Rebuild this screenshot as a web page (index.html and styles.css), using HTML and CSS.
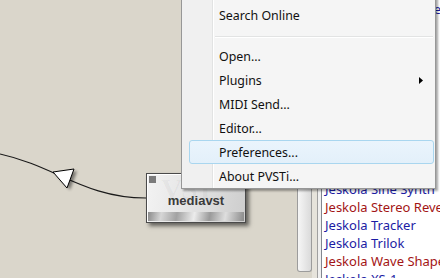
FILE: index.html
```html
<!DOCTYPE html>
<html>
<head>
<meta charset="utf-8">
<link rel="stylesheet" href="styles.css">
</head>
<body>
<div class="app">
  <div class="canvas">
    <svg class="wires" width="297" height="278" viewBox="0 0 297 278">
      <defs>
        <filter id="blur" x="-50%" y="-50%" width="200%" height="200%"><feGaussianBlur stdDeviation="1.6"/></filter>
      </defs>
      <path d="M0,154 C55,166 85,198 146,198" fill="none" stroke="#1a1a1a" stroke-width="1.2"/>
      <polygon points="56,174 77,171 70,190" fill="#000" opacity="0.45" filter="url(#blur)"/>
      <polygon points="53,172 74,169 67,188" fill="#fff" stroke="#000" stroke-width="1"/>
    </svg>
    <div class="node">
      <div class="node-body">
        <span class="led"></span>
        <span class="watermark">VST</span>
        <span class="node-label">mediavst</span>
      </div>
      <div class="node-bar"></div>
    </div>
  </div>
  <div class="side">
    <div class="track">
      <div class="thumb"></div>
      <div class="gap"></div>
      <div class="edge"></div>
    </div>
    <ul class="list">
      <li class="gen">Jeskola Noise Generator</li>
      <li class="gen">Jeskola Pattern</li>
      <li class="fx">Jeskola Q-Delay</li>
      <li class="fx">Jeskola Raverb</li>
      <li class="fx">Jeskola Reverb</li>
      <li class="fx">Jeskola Reverb 2</li>
      <li class="gen">Jeskola Saw</li>
      <li class="fx">Jeskola Shuffle</li>
      <li class="gen">Jeskola Sine</li>
      <li class="fx">Jeskola Sidechain</li>
      <li class="gen">Jeskola Sine Synth</li>
      <li class="fx">Jeskola Stereo Reverb</li>
      <li class="gen">Jeskola Tracker</li>
      <li class="gen">Jeskola Trilok</li>
      <li class="fx">Jeskola Wave Shaper</li>
      <li class="gen">Jeskola XS-1</li>
    </ul>
  </div>
  <div class="menu">
    <div class="item">Rename...</div>
    <div class="item">Search Online</div>
    <div class="sep"></div>
    <div class="item">Open...</div>
    <div class="item">Plugins<svg class="sub" width="4" height="7" viewBox="0 0 4 7"><path d="M0,0 L4,3.5 L0,7 Z" fill="#000"/></svg></div>
    <div class="item">MIDI Send...</div>
    <div class="item">Editor...</div>
    <div class="item hot">Preferences...</div>
    <div class="item">About PVSTi...</div>
  </div>
</div>
</body>
</html>
```

FILE: styles.css
```css
html, body {
  margin: 0;
  padding: 0;
}
body {
  width: 440px;
  height: 278px;
  overflow: hidden;
  background: #dad6cb;
  font-family: "Noto Sans", "DejaVu Sans", sans-serif;
  font-size: 12px;
}
.app {
  position: relative;
  display: flex;
  width: 440px;
  height: 278px;
}
.canvas {
  position: relative;
  width: 297px;
  height: 278px;
  flex: none;
}
.wires {
  position: absolute;
  left: 0;
  top: 0;
}
.node {
  position: absolute;
  left: 146px;
  top: 173px;
  width: 100px;
  height: 50px;
  box-sizing: border-box;
  border: 1px solid #4a4a4a;
  background: linear-gradient(100deg, #f3f3f3 0%, #e4e4e4 45%, #cdcdcd 100%);
  box-shadow: inset 1px 1px 0 #ffffff, 3px 3px 4px rgba(0, 0, 0, 0.55);
  display: flex;
  flex-direction: column;
}
.node-body {
  position: relative;
  flex: 1;
  display: flex;
  align-items: flex-end;
  justify-content: center;
  padding-bottom: 3px;
}
.led {
  position: absolute;
  left: 2px;
  top: 2px;
  width: 7px;
  height: 7px;
  background: #7b7b7b;
}
.watermark {
  position: absolute;
  left: 14px;
  top: -2px;
  font-family: "Liberation Serif", serif;
  font-weight: bold;
  font-size: 30px;
  color: rgba(0, 0, 0, 0.04);
  letter-spacing: -2px;
}
.node-label {
  position: relative;
  font-family: "Liberation Sans", Arial, sans-serif;
  font-weight: bold;
  font-size: 13px;
  line-height: 16px;
  color: #3a3a3a;
}
.node-bar {
  height: 9px;
  margin: 0 1px 1px 1px;
  background: linear-gradient(100deg, #8a8a8a 0%, #d6d6d6 14%, #a2a2a2 30%, #ececec 48%, #9a9a9a 64%, #dedede 80%, #8a8a8a 100%);
}
.side {
  flex: 1;
  display: flex;
  height: 278px;
}
.track {
  width: 24px;
  flex: none;
  display: flex;
  align-items: flex-start;
}
.thumb {
  width: 13px;
  height: 271px;
  border: 1px solid #9c9c9c;
  border-top: none;
  border-radius: 0 0 3px 3px;
  background: linear-gradient(to right, #f6f6f6, #dadada);
}
.gap {
  width: 5px;
  height: 278px;
  background: #e6e3db;
}
.edge {
  width: 3px;
  height: 278px;
  border-left: 1px solid #a0a0a0;
  background: #f0f0f0;
}
.list {
  flex: 1;
  margin: 0;
  padding: 0 0 0 3px;
  list-style: none;
  background: #ffffff;
  border-left: 1px solid #828790;
  white-space: nowrap;
  overflow: hidden;
  font-size: 13px;
}
.list li {
  height: 18px;
  line-height: 18px;
}
.gen { color: #1c1ca4; }
.fx { color: #a31515; }
.menu {
  position: absolute;
  left: 181px;
  top: -24px;
  width: 253px;
  padding: 2px 0 0 0;
  border: 1px solid #979797;
  background: linear-gradient(to right, #f0f0f0 0, #f0f0f0 30px, #e2e3e3 30px, #e2e3e3 31px, #ffffff 31px, #ffffff 32px, #f5f5f5 32px);
  box-shadow: 2px 2px 2px rgba(0, 0, 0, 0.35);
  color: #111;
  font-size: 12.4px;
}
.item {
  height: 22px;
  margin: 0 1px 0 7px;
  padding-left: 29px;
  border: 1px solid transparent;
  border-radius: 3px;
  display: flex;
  align-items: center;
}
.item.hot {
  background: linear-gradient(to bottom, #eaf4fc, #e3f0fa);
  border-color: #a9d6ef;
}
.sub {
  margin-left: auto;
  margin-right: 10px;
}
.sep {
  height: 17px;
  margin: 0 2px 0 33px;
  position: relative;
}
.sep::after {
  content: "";
  position: absolute;
  left: 0;
  right: 0;
  top: 9px;
  height: 1px;
  border-bottom: 1px solid #ffffff;
  background: #e2e3e3;
}
```
